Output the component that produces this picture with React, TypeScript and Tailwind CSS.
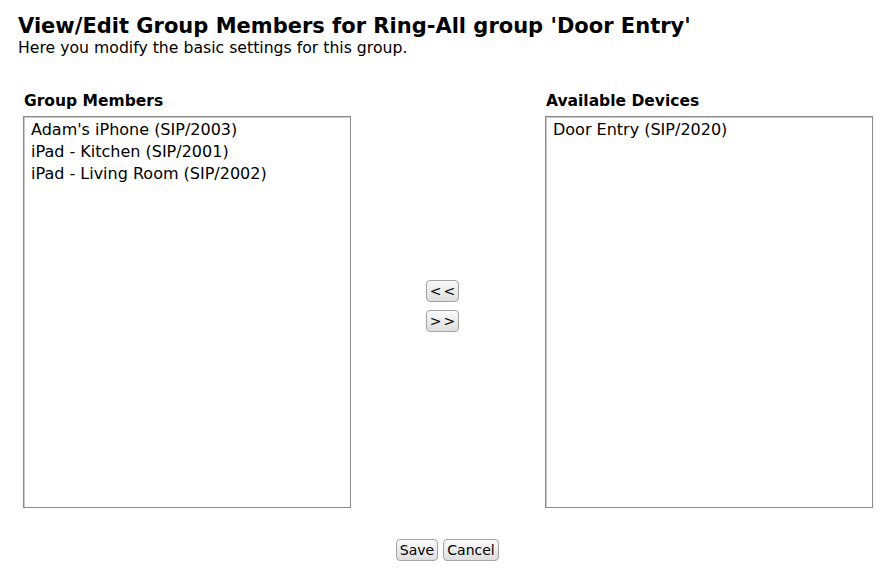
const members = [
  "Adam's iPhone (SIP/2003)",
  "iPad - Kitchen (SIP/2001)",
  "iPad - Living Room (SIP/2002)",
];

const available = ["Door Entry (SIP/2020)"];

function ListBox({ title, items }: { title: string; items: string[] }) {
  return (
    <div className="flex flex-col w-[328px]">
      <h3 className="text-[15.5px] font-bold leading-[18px] mb-[6px] pl-[1px]">{title}</h3>
      <div className="h-[392px] border border-[#8c8c8c] bg-white shadow-[inset_1px_1px_0_#c8c8c8] px-[7px] py-[2px]">
        {items.map((item) => (
          <div key={item} className="text-[16px] leading-[22px] text-black whitespace-nowrap">
            {item}
          </div>
        ))}
      </div>
    </div>
  );
}

function Btn({ children, w }: { children: React.ReactNode; w: string }) {
  return (
    <button
      className={`${w} h-[22px] rounded-[4px] border border-[#a3a3a3] bg-gradient-to-b from-[#fafafa] to-[#dedede] text-[14px] leading-none text-black flex items-center justify-center`}
    >
      {children}
    </button>
  );
}

export default function App() {
  return (
    <div
      className="w-[885px] h-[573px] bg-white text-black pl-[18px] pr-[12px] pt-[14px]"
      style={{ fontFamily: "Verdana, 'DejaVu Sans', sans-serif" }}
    >
      <h1 className="text-[21px] font-bold leading-[25px]">
        View/Edit Group Members for Ring-All group 'Door Entry'
      </h1>
      <p className="text-[15.7px] leading-[17px]">Here you modify the basic settings for this group.</p>

      <div className="flex items-stretch pl-[5px] mt-[36px]">
        <ListBox title="Group Members" items={members} />
        <div className="flex-1 flex flex-col items-center justify-center gap-[8px] pt-[12px] pr-[11px]">
          <Btn w="w-[33px]"><span className="tracking-[2px] pl-[2px]">&lt;&lt;</span></Btn>
          <Btn w="w-[33px]"><span className="tracking-[2px] pl-[2px]">&gt;&gt;</span></Btn>
        </div>
        <ListBox title="Available Devices" items={available} />
      </div>

      <div className="flex justify-center gap-[5px] mt-[31px] pl-[4px]">
        <Btn w="w-[42px]">Save</Btn>
        <Btn w="w-[56px]">Cancel</Btn>
      </div>
    </div>
  );
}
